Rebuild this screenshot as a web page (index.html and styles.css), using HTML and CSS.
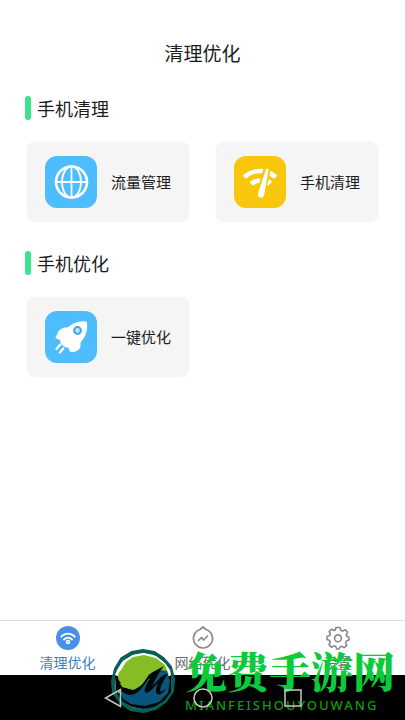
FILE: index.html
```html
<!DOCTYPE html>
<html lang="zh-CN">
<head>
    <meta charset="UTF-8">
    <meta name="viewport" content="width=device-width, initial-scale=1.0">
    <title>清理优化</title>
    <link rel="stylesheet" href="styles.css">
</head>
<body>
    <header class="header">
        <h1>清理优化</h1>
    </header>

    <main class="content">
        <section class="section">
            <h2 class="section-title">手机清理</h2>
            <div class="cards">
                <button class="card" type="button">
                    <svg class="card-icon blue" viewBox="0 0 52 52" fill="none" stroke="#fff" stroke-width="1.8">
                        <circle cx="26.5" cy="26" r="15.5" stroke-width="2.6"/>
                        <ellipse cx="26.5" cy="26" rx="9.5" ry="15.5"/>
                        <path d="M26.5 10.500V41.500M11 26H42"/>
                    </svg>
                    <span>流量管理</span>
                </button>
                <button class="card" type="button">
                    <svg class="card-icon yellow" viewBox="0 0 52 52" fill="#fff">
                        <path d="M8.500 19.500C14 14.500 21 12.200 29.500 13L28 17.300C21.500 16.800 16.500 18.700 12.300 22.800Z"/>
                        <path d="M36.500 15C39 16 41.500 17.600 43.500 19.500L39.800 22.800C38.500 21.600 37.200 20.700 35.700 20Z"/>
                        <path d="M15.500 26.300C19 23.300 22.500 22.300 26.700 22.400L25.200 27C22.800 27.100 21 28 19.200 29.700Z"/>
                        <path d="M34.800 23.300C36 24 37.200 25 38 26.300L34 29.800L33.200 29Z"/>
                        <path d="M32.300 12.500L34.800 13.200L30.300 38C29.600 41.500 27.500 42.200 25.600 41.300C23.700 40.500 23.400 38.800 24.200 36.700Z"/>
                    </svg>
                    <span>手机清理</span>
                </button>
            </div>
        </section>

        <section class="section">
            <h2 class="section-title">手机优化</h2>
            <div class="cards">
                <button class="card" type="button">
                    <svg class="card-icon blue" viewBox="0 0 52 52" fill="#fff">
                        <path d="M41 10.500C34 9.500 27.500 12 22.500 16.500C18 16 13.500 18.500 12.500 22.500C12 24.200 10.800 25 10.500 26.800C11.500 28.300 14 28 15.300 29.500C15.500 33.500 19 36.500 23.200 36.800C24.500 38 24 40.200 25.800 41C29 41.500 34.500 40 35.500 35.500C35.800 33.500 35 32 36.500 30C41.500 25 43 17.500 41.800 11.300Z"/>
                        <circle cx="32.500" cy="19.500" r="3.400" fill="#bfe6ff" stroke="#36a5ea" stroke-width="2"/>
                        <path d="M11.500 38L15.300 33.500M15 41.500L18.300 37.500" fill="none" stroke="#fff" stroke-width="2.200" stroke-linecap="round"/>
                    </svg>
                    <span>一键优化</span>
                </button>
            </div>
        </section>
    </main>

    <footer class="footer">
        <nav class="tabs">
            <a class="tab active" href="#clean">
                <svg class="tab-icon" viewBox="0 0 26 26" fill="none" stroke="#fff" stroke-width="1.800" stroke-linecap="round">
                    <circle cx="13" cy="13" r="12" fill="#4a90e8" stroke="none"/>
                    <path d="M6.300 11.500C10.200 7.700 15.800 7.700 19.700 11.500M9 14.500C11.400 12.300 14.600 12.300 17 14.500"/>
                    <circle cx="13" cy="17" r="1.500" stroke-width="1.500"/>
                </svg>
                <span>清理优化</span>
            </a>
            <a class="tab" href="#network">
                <svg class="tab-icon" viewBox="0 0 26 26" fill="none" stroke="#88898b" stroke-width="1.700" stroke-linejoin="round" stroke-linecap="round">
                    <path d="M10 4.500L13 2L16 4.500A9.500 9.500 0 1 1 10 4.500Z"/>
                    <path d="M8.500 15.500L11.500 12.500L13.500 15L17.500 11"/>
                </svg>
                <span>网络优化</span>
            </a>
            <a class="tab" href="#settings">
                <svg class="tab-icon" viewBox="0 0 26 26" fill="none" stroke="#88898b" stroke-width="1.600" stroke-linejoin="round">
                    <path d="M11 2.500H15L15.800 5.200L17.700 6L20.300 4.700L22.600 7.300L21.200 9.800L21.700 11.300L24 12.300V15L21.300 16L20.600 17.800L21.700 20.500L19 22.600L16.700 21.200L15 21.900L14 24H11.700L10.800 21.600L9 20.900L6.400 22.200L4 19.600L5.200 17.200L4.600 15.500L2 14.500V11.500L4.600 10.600L5.300 8.900L4.200 6.300L6.800 4.200L9.200 5.500L10.300 5Z"/>
                    <circle cx="13" cy="13.300" r="3.400"/>
                </svg>
                <span>设置</span>
            </a>
        </nav>

        <div class="watermark">
            <svg class="watermark-logo" viewBox="0 0 66 66">
                <path d="M33 3L44 5L53 11L60 19L63 31L62 43L55 53L45 60L33 63L21 61L11 54L4 44L3 33L6 21L12 11L22 5Z" fill="#fff" stroke="#075f57" stroke-width="4" stroke-linejoin="round"/>
                <path d="M5 28H61L61 44L54 53L44 59L33 61L22 59L12 53L6 44Z" fill="#020705"/>
                <path d="M5 27H61L60 22L55 15L46 8L34 5L23 7L12 14L7 22Z" fill="#fff"/>
                <path d="M7 38L11 35C6 30 8 24 11 22L16 14L23 9L34 7L46 10L55 17L59 27L49 24L33 38L23 46L8 45Z" fill="#86bd24"/>
                <path d="M10 44L22 43L35 35L51 22L57 23L60 33L58 45L49 54L35 58L21 56L13 51Z" fill="#09557f"/>
                <path d="M6 33C8 36 12 36 12 39L23 42C31 40 34 34 38 28C42 23 48 22 54 18C48 25 45 33 42 38C48 33 53 25 58 26C54 31 51 37 50 42C50 45 54 43 56 40C53 47 45 49 46 42C46 40 47 38 48 35C43 40 38 47 35 44C33 42 38 35 40 30C34 35 30 47 20 47C15 47 15 43 6 43Z" fill="#020705"/>
            </svg>
            <div class="watermark-text">
                <strong>免费手游网</strong>
                <span>MIANFEISHOUYOUWANG</span>
            </div>
        </div>

        <div class="system-bar">
            <button type="button" aria-label="返回">
                <svg viewBox="0 0 20 20"><path d="M17.500 1.500V18.500L2.500 10Z"/></svg>
            </button>
            <button type="button" aria-label="主页">
                <svg viewBox="0 0 20 20"><circle cx="10" cy="10" r="9"/></svg>
            </button>
            <button type="button" aria-label="最近任务">
                <svg viewBox="0 0 20 20"><path d="M2 2H18V18H2Z"/></svg>
            </button>
        </div>
    </footer>
</body>
</html>
```
FILE: styles.css
```css
* {
    box-sizing: border-box;
}

body {
    font-family: "Noto Sans CJK SC", sans-serif;
    margin: 0;
    min-height: 100vh;
    display: flex;
    flex-direction: column;
    background-color: #fff;
    color: #1c1c1c;
}

button {
    font: inherit;
    color: inherit;
    border: none;
    cursor: pointer;
}

.header {
    padding: 38px 27px 28px;
    text-align: center;
}

.header h1 {
    margin: 0;
    font-size: 19px;
    font-weight: 400;
    line-height: 30px;
}

.content {
    flex: 1;
    padding: 0 27px;
}

.section {
    margin-bottom: 29px;
}

.section-title {
    display: flex;
    align-items: center;
    gap: 6px;
    margin: 0 0 22px -2px;
    font-size: 18px;
    font-weight: 400;
    line-height: 24px;
}

.section-title::before {
    content: '';
    width: 6px;
    height: 24px;
    border-radius: 3px;
    background-color: #3ce28c;
}

.cards {
    display: grid;
    grid-template-columns: repeat(2, 1fr);
    gap: 27px;
}

.card {
    display: flex;
    align-items: center;
    gap: 14px;
    height: 80px;
    padding: 0 18px;
    border-radius: 8px;
    background-color: #f5f5f5;
    box-shadow: 0 0 3px #f5f5f5;
    font-size: 15px;
    line-height: 20px;
}

.card-icon {
    flex: none;
    width: 52px;
    height: 52px;
    border-radius: 12px;
}

.blue {
    background-color: #4dbdfd;
}

.yellow {
    background-color: #f8c70b;
}

.footer {
    position: relative;
}

.tabs {
    display: grid;
    grid-template-columns: repeat(3, 1fr);
    height: 55px;
    border-top: 1px solid #ddd;
}

.tab {
    display: flex;
    flex-direction: column;
    align-items: center;
    padding-top: 4px;
    color: #6b6b6b;
    font-size: 14px;
    line-height: 22px;
    text-decoration: none;
}

.tab.active {
    color: #3d7fb8;
}

.tab-icon {
    width: 26px;
    height: 26px;
}

.system-bar {
    display: flex;
    align-items: center;
    justify-content: center;
    gap: 70px;
    height: 45px;
    background-color: #000;
}

.system-bar button {
    position: relative;
    display: flex;
    padding: 0;
    background: none;
}

.system-bar svg {
    width: 20px;
    height: 20px;
    fill: none;
    stroke: #c8c8c8;
    stroke-width: 1.5;
}

/* site mark lies over the tabs and the system bar */
.watermark {
    position: absolute;
    right: 10px;
    bottom: 6px;
    display: flex;
    align-items: center;
    gap: 9px;
    pointer-events: none;
}

.watermark-logo {
    width: 66px;
    height: 66px;
}

.watermark-text {
    display: flex;
    flex-direction: column;
    gap: 4px;
    color: #0bcb3c;
}

.watermark-text strong {
    font-family: "Noto Serif CJK SC", "Noto Sans CJK SC", serif;
    font-size: 42px;
    font-weight: 900;
    line-height: 44px;
}

.watermark-text span {
    color: #0c9d12;
    font-family: "Noto Sans", sans-serif;
    font-size: 13px;
    font-weight: 500;
    letter-spacing: 2px;
    line-height: 18px;
}
```
